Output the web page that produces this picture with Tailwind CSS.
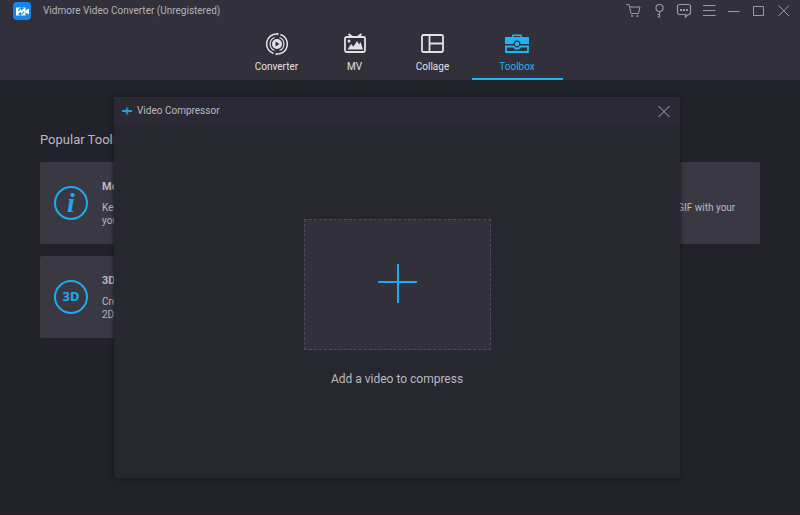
<!DOCTYPE html>
<html lang="en">

<head>
    <meta charset="UTF-8">
    <meta name="viewport" content="width=device-width, initial-scale=1.0">
    <title>Vidmore Video Converter</title>
    <script src="https://cdn.jsdelivr.net/npm/@tailwindcss/browser@4"></script>
</head>

<body class="relative flex flex-col min-h-screen bg-[#22222b] font-[Roboto,sans-serif] text-[10px] text-[#b9b9c0] border-b border-[#211b25]">
    <header class="bg-[#31303b]">
        <!-- title bar -->
        <div class="flex items-center justify-between h-[22px] pl-[13px] pr-2">
            <div class="flex items-center gap-3">
                <svg class="w-[18px] h-[18px]" viewBox="0 0 18 18">
                    <rect width="18" height="18" rx="4" fill="#1684ee" />
                    <path d="M3 5.500h9.500v8H3z" fill="#fff" />
                    <path d="M12.500 8.500l3.500-2v6l-3.500-2z" fill="#fff" />
                    <path d="M5.500 9A2.500 2.500 0 0 1 8 6.500M10.500 9.500A2.500 2.500 0 0 1 8 12" stroke="#19c8c4" stroke-width="1.500" fill="none" />
                    <path d="M8 4.500l3 2-3 2zM8 14l-3-2 3-2z" fill="#1684ee" />
                </svg>
                <h1 class="leading-5 text-[#b4b4bc]">Vidmore Video Converter (Unregistered)</h1>
            </div>
            <div class="flex items-center gap-[9px] text-[#9a9aa5]">
                <button aria-label="Buy">
                    <svg class="w-4 h-4" viewBox="0 0 16 16" fill="none" stroke="currentColor">
                        <path d="M.5 1.500H3l2 9h7.500L14 4H3.500" />
                        <circle cx="6" cy="13" r="1" fill="currentColor" stroke="none" />
                        <circle cx="11.500" cy="13" r="1" fill="currentColor" stroke="none" />
                    </svg>
                </button>
                <button aria-label="Register">
                    <svg class="w-4 h-4" viewBox="0 0 16 16" fill="none" stroke="currentColor" stroke-width="1.200">
                        <circle cx="8.500" cy="5" r="3.500" />
                        <path d="M8.500 8.500V14.500M8.500 11.500H6.500M8.500 14H6.500" />
                    </svg>
                </button>
                <button aria-label="Feedback">
                    <svg class="w-4 h-4" viewBox="0 0 16 16" fill="none" stroke="currentColor">
                        <path d="M3.500 1.500h9a2 2 0 0 1 2 2v6a2 2 0 0 1-2 2H12L9.500 14v-2.500h-6a2 2 0 0 1-2-2v-6a2 2 0 0 1 2-2z" stroke-width="1.200" />
                        <path d="M4 6h2v2H4zM7 6h2v2H7zM10 6h2v2h-2z" fill="currentColor" stroke="none" />
                    </svg>
                </button>
                <button aria-label="Menu">
                    <svg class="w-4 h-4" viewBox="0 0 16 16" stroke="currentColor">
                        <path d="M2 2.500h12.500M2 7.500h12.500M2 12.500h12.500" />
                    </svg>
                </button>
                <button aria-label="Minimize">
                    <svg class="w-4 h-4" viewBox="0 0 16 16" stroke="currentColor">
                        <path d="M2 8.500h11.500" />
                    </svg>
                </button>
                <button aria-label="Maximize">
                    <svg class="w-4 h-4" viewBox="0 0 16 16" fill="none" stroke="currentColor">
                        <path d="M2.500 3.500h10v9h-10z" />
                    </svg>
                </button>
                <button aria-label="Close">
                    <svg class="w-4 h-4" viewBox="0 0 16 16" stroke="currentColor">
                        <path d="M2.500 2.500l10.500 10.500M13 2.500L2.500 13" />
                    </svg>
                </button>
            </div>
        </div>
        <!-- tabs -->
        <nav class="flex justify-center h-[58px] leading-4 text-[#e2e2e6]">
            <a href="#converter" class="flex flex-col items-center gap-[3px] w-[78px] pt-2.5 border-b-2 border-transparent">
                <svg class="w-6 h-6" viewBox="0 0 24 24" fill="none" stroke="currentColor" stroke-width="1.500">
                    <path d="M15.500 2.500a10 10 0 0 1-3.500 19.500M8.500 21.500A10 10 0 0 1 12 2" />
                    <path d="M9.500 5.500a7 7 0 0 0 0 13M14.500 5.500a7 7 0 0 1 0 13" stroke-width="1.200" />
                    <circle cx="12" cy="12" r="5" fill="currentColor" stroke="none" />
                    <path d="M10.500 9.500v5l4-2.500z" fill="#31303b" stroke="none" />
                    <path d="M12 .5l2 1.500-2 1.500zM12 20.500v3l-2-1.500z" fill="currentColor" stroke="none" />
                </svg>
                <span>Converter</span>
            </a>
            <a href="#mv" class="flex flex-col items-center gap-[3px] w-[78px] pt-2.5 border-b-2 border-transparent">
                <svg class="w-6 h-6" viewBox="0 0 24 24" fill="none" stroke="currentColor" stroke-width="1.800">
                    <rect x="2" y="5" width="20" height="15" rx="1.500" />
                    <path d="M5.500 2L9.500 5M18.500 2L14.500 5" />
                    <path d="M4.500 17.500l3.500-5.500 2.500 2.500L14 9l2 3.500 1.500-2.500 2.500 7.500z" fill="currentColor" stroke="none" />
                    <circle cx="6" cy="9" r="1.500" fill="currentColor" stroke="none" />
                </svg>
                <span>MV</span>
            </a>
            <a href="#collage" class="flex flex-col items-center gap-[3px] w-[78px] pt-2.5 border-b-2 border-transparent">
                <svg class="w-6 h-6" viewBox="0 0 24 24" fill="none" stroke="currentColor" stroke-width="1.800">
                    <rect x="1" y="3" width="21" height="17" rx="1.500" />
                    <path d="M8.500 3v17M8.500 11.500H22" />
                </svg>
                <span>Collage</span>
            </a>
            <a href="#toolbox" class="flex flex-col items-center gap-[3px] w-[91px] pt-2.5 border-b-2 border-[#1fb4f2] text-[#1fb4f2]" aria-current="page">
                <svg class="w-6 h-6" viewBox="0 0 24 24" fill="currentColor">
                    <path d="M0 6a1 1 0 0 1 1-1h6V3.500a1 1 0 0 1 1-1h8a1 1 0 0 1 1 1V5h6a1 1 0 0 1 1 1v6h-8.500a3.500 3.500 0 0 0-7 0H0zM8.500 4v1h7V4z" fill-rule="evenodd" />
                    <circle cx="12" cy="12" r="2.200" />
                    <path d="M1 14.500h7.500l2 2h3l2-2H23V20H1z" fill="none" stroke="currentColor" stroke-width="1.800" />
                </svg>
                <span>Toolbox</span>
            </a>
        </nav>
    </header>

    <main class="flex-1 px-10 pt-[50px]">
        <h2 class="text-[13px] leading-5">Popular Tools</h2>
        <div class="grid grid-cols-3 gap-x-3.5 gap-y-3 pt-3">
            <section class="flex items-center gap-3.5 h-[82px] pl-3.5 rounded-xs bg-[#393843]">
                <div class="flex items-center justify-center shrink-0 w-[34px] h-[34px] rounded-full border-2 border-[#1fa9f0] font-['Liberation_Serif',serif] text-[28px] font-bold italic text-[#1fa9f0]">i</div>
                <div class="leading-[13px]">
                    <h3 class="pb-2 text-[11px] font-bold">Media Metadata Editor</h3>
                    <p>Keep original file info or edit as<br>you want</p>
                </div>
            </section>
            <section class="flex items-center gap-3.5 h-[82px] pl-3.5 rounded-xs bg-[#393843] col-start-3">
                <div class="shrink-0 w-[34px] h-[34px] rounded-full border-2 border-[#1fa9f0]"></div>
                <div class="leading-[13px]">
                    <h3 class="pb-2 text-[11px] font-bold">GIF Maker</h3>
                    <p>Create customized GIF with your<br>video or image</p>
                </div>
            </section>
            <section class="flex items-center gap-3.5 h-[82px] pl-3.5 rounded-xs bg-[#393843]">
                <div class="flex items-center justify-center shrink-0 w-[34px] h-[34px] rounded-full border-2 border-[#1fa9f0] font-['Noto_Sans',sans-serif] text-[13px] font-bold text-[#1fa9f0]">3D</div>
                <div class="leading-[13px]">
                    <h3 class="pb-2 text-[11px] font-bold">3D Maker</h3>
                    <p>Create customized 3D video from<br>2D</p>
                </div>
            </section>
        </div>
    </main>

    <!-- compressor window -->
    <div role="dialog" aria-labelledby="dialog-title" class="absolute top-[97px] bottom-9 left-[114px] right-[120px] flex flex-col bg-[#272730] shadow-[0_0_4px_#15151b]">
        <div class="flex items-center justify-between h-7 px-2 bg-[#2b2a34]">
            <div class="flex items-center gap-[5px]">
                <svg class="w-[10px] h-[10px]" viewBox="0 0 10 10" stroke="#2a9bd6" fill="none">
                    <path d="M5 1v3M5 6v3M0 4.500h10M0 5.500h10M3.500 2.500L5 4l1.500-1.500M3.500 7.500L5 6l1.500 1.500" />
                </svg>
                <h2 id="dialog-title" class="leading-5">Video Compressor</h2>
            </div>
            <button aria-label="Close Video Compressor" class="text-[#a5a5ae]">
                <svg class="w-4 h-4" viewBox="0 0 16 16" stroke="currentColor">
                    <path d="M2.500 3l11 11M13.500 3l-11 11" />
                </svg>
            </button>
        </div>
        <div class="flex flex-col items-center justify-center gap-[19px] flex-1 pt-1">
            <button aria-labelledby="add-label" class="flex items-center justify-center w-[187px] h-[131px] bg-[#31303b] border border-dashed border-[#4c4b58]">
                <svg class="w-10 h-10" viewBox="0 0 40 40" stroke="#1fa9f0" stroke-width="2">
                    <path d="M21 0v39M1 18h39" />
                </svg>
            </button>
            <p id="add-label" class="text-xs leading-5">Add a video to compress</p>
        </div>
    </div>
</body>

</html>
